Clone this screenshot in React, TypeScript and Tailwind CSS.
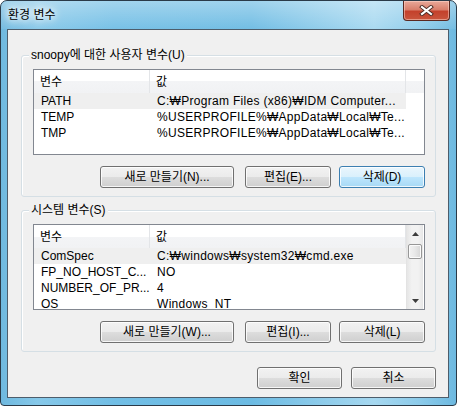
import React from 'react';

const userVars: [string, string][] = [
  ['PATH', 'C:₩Program Files (x86)₩IDM Computer...'],
  ['TEMP', '%USERPROFILE%₩AppData₩Local₩Te...'],
  ['TMP', '%USERPROFILE%₩AppData₩Local₩Te...'],
];

const systemVars: [string, string][] = [
  ['ComSpec', 'C:₩windows₩system32₩cmd.exe'],
  ['FP_NO_HOST_C...', 'NO'],
  ['NUMBER_OF_PR...', '4'],
  ['OS', 'Windows_NT'],
];

const WinButton: React.FC<{ label: string; w: string; primary?: boolean }> = ({ label, w, primary }) => (
  <button
    className={`${w} h-[22px] rounded-[3px] border text-[12px] leading-none text-black flex items-center justify-center shadow-[inset_0_0_0_1px_rgba(255,255,255,0.8)] ${
      primary
        ? 'border-[#3c7fb1] bg-[linear-gradient(to_bottom,#eaf6fd_0%,#d9f0fc_50%,#bee6fd_50%,#a7d9f5_100%)]'
        : 'border-[#707070] bg-[linear-gradient(to_bottom,#f2f2f2_0%,#ebebeb_50%,#dddddd_50%,#cfcfcf_100%)]'
    }`}
  >
    {label}
  </button>
);

const ScrollBar: React.FC = () => (
  <div className="w-[17px] h-full flex flex-col bg-[linear-gradient(to_right,#e6e6e6,#f2f2f2_30%,#f2f2f2_70%,#e6e6e6)] border-l border-[#e3e3e3]">
    <div className="h-[17px] flex items-center justify-center">
      <svg width="7" height="4" viewBox="0 0 7 4"><path d="M3.5 0 L7 4 L0 4 Z" fill="#3c3c3c" /></svg>
    </div>
    <div className="mt-[2px] h-[15px] mx-[1px] rounded-[2px] border border-[#979797] bg-[linear-gradient(to_right,#f3f3f3,#e8e8e8_50%,#d6d6d6)] shadow-[inset_0_0_0_1px_#fbfbfb]" />
    <div className="flex-1" />
    <div className="h-[17px] flex items-center justify-center">
      <svg width="7" height="4" viewBox="0 0 7 4"><path d="M0 0 L7 0 L3.5 4 Z" fill="#3c3c3c" /></svg>
    </div>
  </div>
);

const ListView: React.FC<{ rows: [string, string][]; scroll?: boolean }> = ({ rows, scroll }) => (
  <div className="ml-[11px] mr-[10px] mt-[13px] h-[86px] border border-[#828790] bg-white flex overflow-hidden">
    <div className="w-[372px] flex flex-col overflow-hidden">
      <div className="h-[23px] shrink-0 flex bg-[linear-gradient(to_bottom,#ffffff_0%,#ffffff_50%,#f3f4f6_50%,#f1f2f4_100%)]">
        <div className="w-[116px] pl-[6px] flex items-center border-r border-[#e3e5e8]">변수</div>
        <div className="w-[256px] pl-[6px] flex items-center border-r border-[#e3e5e8]">값</div>
      </div>
      {rows.map(([name, value], i) => (
        <div key={name} className={`h-[16px] shrink-0 flex items-center ${i === 0 ? 'bg-[#efefef]' : ''}`}>
          <div className="w-[116px] pl-[7px] whitespace-nowrap overflow-hidden">{name}</div>
          <div className="w-[256px] pl-[7px] whitespace-nowrap overflow-hidden tracking-[0.3px]">{value}</div>
        </div>
      ))}
    </div>
    {scroll ? <ScrollBar /> : <div className="flex-1 h-[23px] bg-[linear-gradient(to_bottom,#ffffff_0%,#ffffff_50%,#f3f4f6_50%,#f1f2f4_100%)]" />}
  </div>
);

const GroupBox: React.FC<{ title: string; rows: [string, string][]; scroll?: boolean; keys: [string, string, string] }> = ({
  title,
  rows,
  scroll,
  keys,
}) => (
  <div className="relative ml-[13px] w-[415px] h-[142px] rounded-[3px] border border-[#d5dfe5] shadow-[inset_1px_1px_0_#ffffff]">
    <span className="absolute -top-[8px] left-[7px] px-[2px] bg-[#f0f0f0] leading-[14px]">{title}</span>
    <ListView rows={rows} scroll={scroll} />
    <div className="mt-[11px] mr-[10px] flex justify-end gap-[8px]">
      <div className="mr-[3px]"><WinButton label={keys[0]} w="w-[134px]" /></div>
      <WinButton label={keys[1]} w="w-[86px]" />
      <WinButton label={keys[2]} w="w-[86px]" primary={!scroll} />
    </div>
  </div>
);

export default function App() {
  return (
    <div className="w-[457px] h-[406px] bg-white font-['Liberation_Sans','Noto_Sans_CJK_KR',sans-serif] text-[12px] text-black">
      <div className="relative w-[457px] h-[406px] rounded-t-[7px] rounded-b-[4px] border border-[#2a3a48] bg-[linear-gradient(to_right,#6fb9df_0%,#86c8e9_8%,#71bee5_25%,#6cbbe3_55%,#a6d8f0_82%,#8ccbea_92%,#6db9e0_100%)] overflow-hidden">
        <div className="absolute inset-x-0 top-0 h-[28px] bg-[linear-gradient(to_bottom,rgba(255,255,255,0.35),rgba(255,255,255,0.05))]" />
        <div className="relative h-[28px] flex items-center pl-[7px]">
          <span className="text-[12px] [text-shadow:0_0_6px_#fff,0_0_10px_#fff,0_0_12px_#fff]">환경 변수</span>
        </div>
        <div className="absolute top-0 right-[6px] w-[47px] h-[20px] rounded-b-[4px] border border-t-0 border-[#5a2820] bg-[linear-gradient(to_bottom,#e9a99a_0%,#d97f6c_45%,#c4412c_55%,#c9553d_100%)] shadow-[inset_0_0_0_1px_rgba(255,220,210,0.5)] flex items-center justify-center">
          <svg width="15" height="11" viewBox="0 0 15 11">
            <path d="M3 2 L12 9 M12 2 L3 9" stroke="#4a2a24" strokeWidth="4" strokeLinecap="square" />
            <path d="M3 2 L12 9 M12 2 L3 9" stroke="#ffffff" strokeWidth="2.2" strokeLinecap="square" />
          </svg>
        </div>
        <div className="relative ml-[6px] w-[442px] h-[369px] border border-[#4d5d6b] bg-[#f0f0f0]">
          <div className="h-[25px]" />
          <GroupBox title="snoopy에 대한 사용자 변수(U)" rows={userVars} keys={['새로 만들기(N)...', '편집(E)...', '삭제(D)']} />
          <div className="h-[13px]" />
          <GroupBox title="시스템 변수(S)" rows={systemVars} scroll keys={['새로 만들기(W)...', '편집(I)...', '삭제(L)']} />
          <div className="mt-[15px] ml-[249px] flex gap-[9px]">
            <WinButton label="확인" w="w-[85px]" />
            <WinButton label="취소" w="w-[85px]" />
          </div>
        </div>
      </div>
    </div>
  );
}
